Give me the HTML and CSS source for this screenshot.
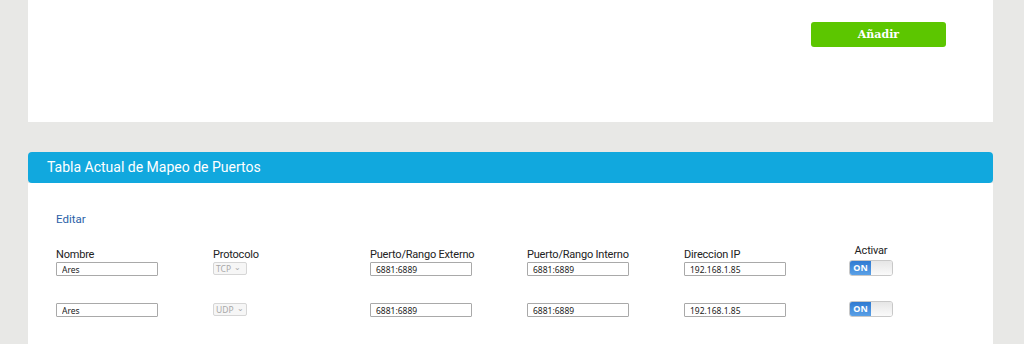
FILE: index.html
```html
<!DOCTYPE html>
<html>
    <head>
        <meta charset="utf-8">
        <link rel="stylesheet" href="styles.css">
    </head>
    <body class="page">
        <div class="panel top">
            <button type="button" class="add">Añadir</button>
        </div>

        <div class="card">
            <div class="card-head">Tabla Actual de Mapeo de Puertos</div>
            <div class="card-body">
                <a class="edit" href="#">Editar</a>

                <div class="row labels">
                    <span class="cell">Nombre</span>
                    <span class="cell">Protocolo</span>
                    <span class="cell">Puerto/Rango Externo</span>
                    <span class="cell">Puerto/Rango Interno</span>
                    <span class="cell">Direccion IP</span>
                    <span class="cell act">Activar</span>
                </div>

                <div class="row entry">
                    <span class="cell"><input class="field" type="text" value="Ares"></span>
                    <span class="cell"><span class="proto">TCP <i>&#8964;</i></span></span>
                    <span class="cell"><input class="field" type="text" value="6881:6889"></span>
                    <span class="cell"><input class="field" type="text" value="6881:6889"></span>
                    <span class="cell"><input class="field" type="text" value="192.168.1.85"></span>
                    <span class="cell act"><span class="toggle"><b>ON</b><em></em></span></span>
                </div>

                <div class="row entry second">
                    <span class="cell"><input class="field" type="text" value="Ares"></span>
                    <span class="cell"><span class="proto">UDP <i>&#8964;</i></span></span>
                    <span class="cell"><input class="field" type="text" value="6881:6889"></span>
                    <span class="cell"><input class="field" type="text" value="6881:6889"></span>
                    <span class="cell"><input class="field" type="text" value="192.168.1.85"></span>
                    <span class="cell act"><span class="toggle"><b>ON</b><em></em></span></span>
                </div>
            </div>
        </div>
    </body>
</html>
```

FILE: styles.css
```css
.page{
    margin: 0;
    background-color: #e8e8e6;
    font-family: Roboto, "Noto Sans", sans-serif;
    color: #222;
    height: 344px;
    overflow: hidden;
}
.panel{
    background-color: #fff;
    margin-left: 28px;
    width: 965px;
}
.top{
    height: 122px;
    display: flex;
    justify-content: flex-end;
    align-items: flex-start;
}
.add{
    margin-top: 22px;
    margin-right: 47px;
    width: 135px;
    height: 25px;
    border: none;
    border-radius: 3px;
    background-color: #5cc600;
    color: #fff;
    font-family: "DejaVu Serif", serif;
    font-weight: bold;
    font-size: 11px;
    padding: 0;
}
.card{
    margin-top: 30px;
    margin-left: 28px;
    width: 965px;
}
.card-head{
    height: 31px;
    background-color: #11a8de;
    border-radius: 4px;
    color: #fff;
    font-size: 14px;
    line-height: 31px;
    padding-left: 19px;
}
.card-body{
    background-color: #fff;
    height: 134px;
    padding-left: 28px;
    padding-top: 28px;
}
.edit{
    display: block;
    font-size: 11.5px;
    line-height: 16px;
    color: #2b5fa8;
    text-decoration: none;
}
.row{
    display: flex;
}
.cell{
    width: 157px;
    flex: none;
}
.labels{
    margin-top: 22px;
    font-size: 11px;
    letter-spacing: -0.2px;
    line-height: 12px;
}
.act{
    width: 60px;
    text-align: center;
}
.labels .act{
    position: relative;
    top: -4px;
}
.entry{
    margin-top: -1px;
    height: 16px;
    align-items: flex-end;
}
.second{
    margin-top: 25px;
}
.field{
    box-sizing: border-box;
    display: block;
    width: 102px;
    height: 14px;
    border: 1px solid #a9a9a9;
    border-radius: 1px;
    padding: 0 5px;
    font-family: "Noto Sans", "DejaVu Sans", sans-serif;
    font-size: 8.5px;
    color: #222;
    margin: 0;
}
.proto{
    box-sizing: border-box;
    display: inline-flex;
    align-items: center;
    width: 34px;
    height: 13px;
    border: 1px solid #d6d6d6;
    border-radius: 2px;
    padding-left: 2px;
    font-family: "Noto Sans", sans-serif;
    font-size: 8.5px;
    color: #a8a8a8;
    background-color: #f6f6f6;
}
.proto i{
    font-style: normal;
    font-size: 8px;
    margin-left: 3px;
    position: relative;
    top: -2px;
}
.toggle{
    display: inline-flex;
    width: 44px;
    height: 16px;
    border: 1px solid #c8c8c8;
    border-radius: 3px;
    overflow: hidden;
    box-sizing: border-box;
    vertical-align: bottom;
}
.toggle b{
    width: 21px;
    background: linear-gradient(#2f7ad2, #5aa0e6);
    color: #fff;
    font-family: "Noto Sans", sans-serif;
    font-size: 9px;
    line-height: 14px;
    text-align: center;
}
.toggle em{
    flex: 1;
    background: linear-gradient(#e6e6e6, #fafafa);
}
```
